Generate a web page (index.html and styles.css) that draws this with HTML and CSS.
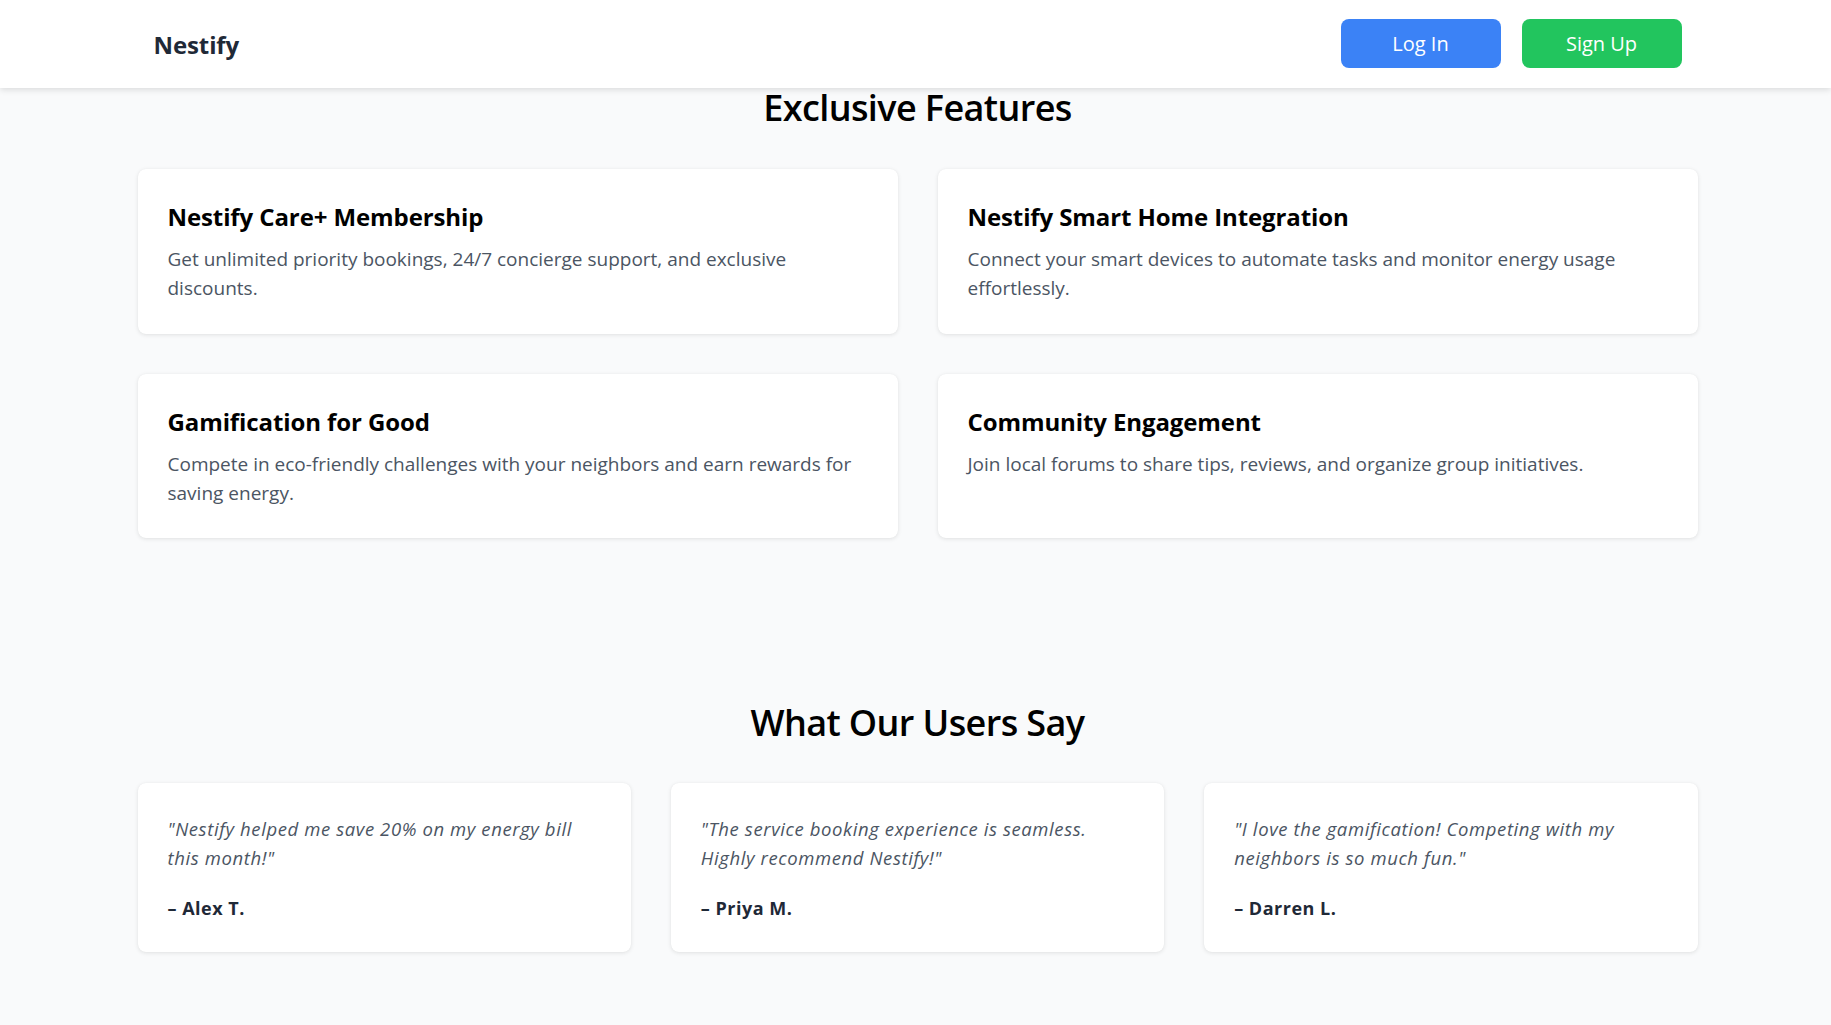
FILE: index.html
```html
<!DOCTYPE html>
<html lang="en">
<head>
<meta charset="utf-8">
<title>Nestify</title>
<link rel="stylesheet" href="styles.css">
</head>
<body>
<header class="site-header">
  <div class="container header-inner">
    <div class="logo">Nestify</div>
    <nav class="auth">
      <button class="btn btn-login">Log In</button>
      <button class="btn btn-signup">Sign Up</button>
    </nav>
  </div>
</header>

<main>
  <section class="section features">
    <div class="container">
      <h2 class="section-title">Exclusive Features</h2>
      <div class="feature-grid">
        <div class="card">
          <h3 class="card-title">Nestify Care+ Membership</h3>
          <p class="card-text">Get unlimited priority bookings, 24/7 concierge support, and exclusive discounts.</p>
        </div>
        <div class="card">
          <h3 class="card-title">Nestify Smart Home Integration</h3>
          <p class="card-text">Connect your smart devices to automate tasks and monitor energy usage effortlessly.</p>
        </div>
        <div class="card">
          <h3 class="card-title">Gamification for Good</h3>
          <p class="card-text">Compete in eco-friendly challenges with your neighbors and earn rewards for saving energy.</p>
        </div>
        <div class="card">
          <h3 class="card-title">Community Engagement</h3>
          <p class="card-text">Join local forums to share tips, reviews, and organize group initiatives.</p>
        </div>
      </div>
    </div>
  </section>

  <section class="section testimonials">
    <div class="container">
      <h2 class="section-title">What Our Users Say</h2>
      <div class="testimonial-grid">
        <div class="card testimonial">
          <p class="quote">"Nestify helped me save 20% on my energy bill this month!"</p>
          <p class="author">– Alex T.</p>
        </div>
        <div class="card testimonial">
          <p class="quote">"The service booking experience is seamless. Highly recommend Nestify!"</p>
          <p class="author">– Priya M.</p>
        </div>
        <div class="card testimonial">
          <p class="quote">"I love the gamification! Competing with my neighbors is so much fun."</p>
          <p class="author">– Darren L.</p>
        </div>
      </div>
    </div>
  </section>
</main>
</body>
</html>
```

FILE: styles.css
```css
* {
  box-sizing: border-box;
}

html, body {
  margin: 0;
  padding: 0;
}

body {
  background: #f9fafb;
  font-family: "Open Sans", "Noto Sans", sans-serif;
  color: #111827;
  min-height: 1025px;
}

.container {
  max-width: 1564px;
  margin: 0 auto;
  padding-left: 4px;
}

/* Header */
.site-header {
  position: relative;
  z-index: 10;
  background: #ffffff;
  box-shadow: 0 2px 6px rgba(0, 0, 0, 0.12);
  height: 88px;
}

.header-inner {
  height: 88px;
  display: flex;
  align-items: center;
  justify-content: space-between;
}

.header-inner .logo,
.header-inner .auth {
  margin: 0 16px;
}

.logo {
  font-size: 24px;
  font-weight: 700;
  color: #1f2937;
  letter-spacing: -0.1px;
}

.header-inner .auth {
  display: flex;
  gap: 21px;
  margin-top: -2px;
}

.btn {
  width: 160px;
  height: 49px;
  border: none;
  border-radius: 8px;
  color: #ffffff;
  font-family: inherit;
  font-size: 20px;
  cursor: pointer;
}

.btn-login {
  background: #3b82f6;
}

.btn-signup {
  background: #22c55e;
}

/* Sections */
.section-title {
  margin: 0;
  text-align: center;
  font-size: 36px;
  line-height: 40px;
  font-weight: 600;
  color: #000000;
  letter-spacing: -0.6px;
}

.features .section-title {
  margin-top: 0;
  margin-bottom: 41px;
}

.testimonials {
  margin-top: 165px;
}

.testimonials .section-title {
  margin-bottom: 40px;
}

.feature-grid {
  display: grid;
  grid-template-columns: 1fr 1fr;
  gap: 40px;
}

.testimonial-grid {
  display: grid;
  grid-template-columns: 1fr 1fr 1fr;
  gap: 40px;
}

.card {
  background: #ffffff;
  border-radius: 8px;
  box-shadow: 0 1px 4px rgba(0, 0, 0, 0.1), 0 0 1px rgba(0, 0, 0, 0.05);
  padding: 32px 40px 30px 30px;
}

.card-title {
  margin: 0 0 12px;
  font-size: 24px;
  line-height: 32px;
  font-weight: 700;
  color: #000000;
  letter-spacing: -0.1px;
}

.card-text {
  margin: 0;
  font-size: 19px;
  line-height: 29.25px;
  color: #4b5563;
}

.testimonial {
  padding: 31px 32px 30px 30px;
}

.quote {
  margin: 0;
  font-size: 18.5px;
  line-height: 29.25px;
  font-style: italic;
  color: #4b5563;
  letter-spacing: 0.6px;
}

.author {
  margin: 21px 0 0;
  font-size: 18px;
  line-height: 28px;
  font-weight: 700;
  color: #1f2937;
  letter-spacing: 0.5px;
}
```
